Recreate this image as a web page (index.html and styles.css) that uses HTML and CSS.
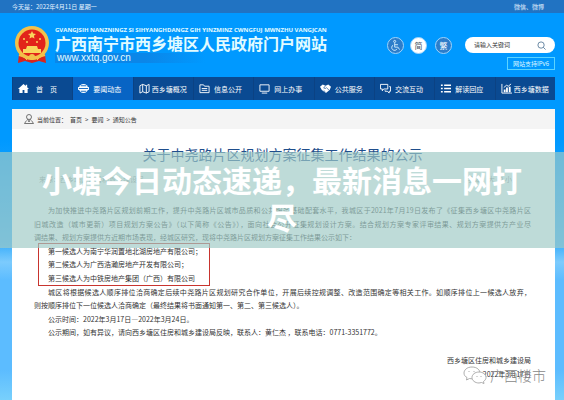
FILE: index.html
```html
<!DOCTYPE html>
<html lang="zh-CN">
<head>
    <meta charset="UTF-8">
    <meta name="viewport" content="width=device-width, initial-scale=1.0">
    <title>小塘今日动态速递，最新消息一网打尽</title>
    <link rel="stylesheet" href="styles.css">
</head>
<body>
    <div class="topbar">
        <span>今天是：2022年4月11日 星期一</span>
        <span>微信、微博</span>
    </div>

    <header class="header">
        <svg class="emblem" viewBox="0 0 36 38">
            <path d="M5 28 L31 28 L32 37 L25 35 L18 37 L11 35 L4 37 Z" fill="#d9251c"/>
            <circle cx="18" cy="17" r="17" fill="#f2c14a"/>
            <circle cx="18" cy="17" r="13.500" fill="#e2231a"/>
            <path d="M18 5 l1.200 2.600 2.800.3 -2.100 1.900 .6 2.800 -2.500 -1.400 -2.500 1.400 .6 -2.800 -2.100 -1.900 2.800 -.3z" fill="#f9d65c"/>
            <g fill="#f9d65c">
                <circle cx="10" cy="13" r="1"/><circle cx="13" cy="16" r="1"/><circle cx="23" cy="16" r="1"/><circle cx="26" cy="13" r="1"/>
                <path d="M13 20 h10 l1 3 h3 v4 H9 v-4 h3z"/>
            </g>
            <path d="M5 29 q13 5 26 0" fill="none" stroke="#f2c14a" stroke-width="2"/>
            <circle cx="18" cy="31" r="3" fill="#f2c14a"/>
            <path d="M9 30 l4 4 M27 30 l-4 4" stroke="#f2c14a"/>
        </svg>
        <div class="brand">
            <div class="brand-latin">GVANGJSIH NANZNINGZ SI SIHYANGHDANGZ GIH YINZMINZ CWNGFUJ MWNZHU VANGJCAN</div>
            <h1>广西南宁市西乡塘区人民政府门户网站</h1>
            <div class="brand-url">www.xxtq.gov.cn</div>
        </div>
        <div class="tools">
            <button class="round blue" aria-label="无障碍">
                <svg viewBox="0 0 16 16" fill="none" stroke="#d9f1ff" stroke-width="1.100">
                    <circle cx="7" cy="3" r="1.300"/><path d="M7 5 v5 h4 l2 3 M7 7 h4 M5 7.500 a3.500 3.500 0 1 0 5 4.500"/>
                </svg>
            </button>
            <button class="round white">简</button>
            <button class="round blue last">繁</button>
        </div>
        <div class="side">
            <form class="search">
                <input type="text" aria-label="搜索" placeholder="请输入关键词">
                <svg viewBox="0 0 10 10" fill="none" stroke="#5c7e9c"><circle cx="4.500" cy="4.500" r="3.500"/><path d="M7 7 l2.500 2.500"/></svg>
            </form>
            <a class="ipv6" href="#">网站支持IPv6</a>
        </div>
    </header>

    <nav class="nav">
        <a href="#" class="home">
            <svg viewBox="0 0 12 12" fill="#fff"><path d="M6 1 L0 6.500 h1.500 V11 H5 V7.500 h2 V11 h3.500 V6.500 H12 L10 4.600 V2 H8.500 v1.200z"/></svg>
            <span>首&emsp;页</span>
        </a>
        <a href="#" class="active">
            <svg viewBox="0 0 12 12"><circle cx="6" cy="6" r="5" fill="#fff"/><path d="M0 4.500 h12 v3 H0z" fill="#fff"/><path d="M1 6 h10 M3 3 h6 M3 9 h6" stroke="#0864c4"/></svg>
            <span>要闻动态</span>
        </a>
        <a href="#" class="tight">
            <svg viewBox="0 0 12 12" fill="none" stroke="#fff"><path d="M1 3 L4 1.500 L8 3 L11 1.500 V9.500 L8 11 L4 9.500 L1 11z M4 1.500 v8 M8 3 v8"/></svg>
            <span>西乡塘概况</span>
        </a>
        <a href="#">
            <svg viewBox="0 0 12 12" fill="none" stroke="#fff"><path d="M1 10.500 V2 h4 l1 1.500 h5 v7z M3 6 h6 M3 8 h6"/></svg>
            <span>信息公开</span>
        </a>
        <a href="#">
            <svg viewBox="0 0 12 12" fill="none" stroke="#fff"><path d="M1 2 h10 v7 H1z M3 11 h6"/></svg>
            <span>网上办事</span>
        </a>
        <a href="#">
            <svg viewBox="0 0 12 12"><path d="M0 4 L3 1.500 L6 3 L9 1.500 L12 4 L10.500 7.500 L6.500 11 L2 7.500z" fill="#fff"/><path d="M6 3 L4 5.500 L6 6 L7 5 L10 8 M4 8 l2 2" fill="none" stroke="#0a4a92" stroke-width=".7"/></svg>
            <span>公共服务</span>
        </a>
        <a href="#">
            <svg viewBox="0 0 12 12" fill="none" stroke="#fff"><path d="M.5 1.500 h8 v5 H4 L2.500 8.500 V6.500 h-2z M10 4 h1.500 v5 H10 v2 L8 9 H5.500 V8"/></svg>
            <span>交流互动</span>
        </a>
        <a href="#">
            <svg viewBox="0 0 12 12" stroke="#fff" stroke-width="1.500"><path d="M1 2.500 h2 M4.500 2.500 H12 M1 6 h2 M4.500 6 H12 M1 9.500 h2 M4.500 9.500 H12"/></svg>
            <span>解读回应</span>
        </a>
        <a href="#" class="tight">
            <svg viewBox="0 0 12 12" fill="none" stroke="#fff"><path d="M1 1 v10 h11"/><path d="M4 10 V7 M6.500 10 V5 M9.500 10 V4" stroke-width="2"/><path d="M3 5 L6 2.500 L8 3.500 L11 1"/></svg>
            <span>西乡塘数据</span>
        </a>
    </nav>

    <main class="page">
        <div class="crumbs">
            <svg viewBox="0 0 10 10" fill="none" stroke="#555" stroke-width=".8"><circle cx="5" cy="3" r="2.500"/><path d="M3.500 5 L5 8 L6.500 5 M2.500 6.500 L.5 9.500 h9 L7.500 6.500"/></svg>
            <span>当前位置：</span>
            <a href="#">首页</a> &gt; <a href="#">要闻</a> &gt; <a href="#">通知公告</a>
        </div>
        <article class="article">
            <h2>关于中尧路片区规划方案征集工作结果的公示</h2>
            <div class="meta">
                <span>来源：西乡塘区住房和城乡建设局</span>
                <span>【字体：大 中 小】</span>
            </div>
            <div class="lines">
                <p class="indent full">为加快推进中尧路片区规划前期工作，提升中尧路片区城市品质和公共服务基础配套水平，我城区于2021年7月19日发布了《征集西乡塘区中尧路片区</p>
                <p class="full">旧城改造（城市更新）项目规划方案公告》（以下简称《公告》），面向社会公开征集规划设计方案。结合规划方案专家评审结果、规划方案提供方产业尽</p>
                <p>调结果、规划方案提供方近期市场表现，经城区研究，现将中尧路片区规划方案征集工作结果公示如下：</p>
                <div class="picked">
                    <p>第一候选人为南宁华润置地北湖房地产有限公司；</p>
                    <p>第二候选人为广西浩瀚房地产开发有限公司；</p>
                    <p>第三候选人为中铁房地产集团（广西）有限公司</p>
                </div>
                <p class="indent full">城区将根据候选人顺序排位洽商确定后续中尧路片区规划研究合作单位，开展后续控规调整、改造范围确定等相关工作。如顺序排位上一候选人放弃，</p>
                <p>则按顺序排位下一位候选人洽商确定（最终结果将书面通知第一、第二、第三候选人）。</p>
                <p class="indent">公示时间：2022年3月17日—2022年3月24日。</p>
                <p class="indent">公示期间，如有异议，请向西乡塘区住房和城乡建设局反映，联系人：黄仁杰 ，联系电话：0771-3351772。</p>
            </div>
            <div class="sign">
                <p>西乡塘区住房和城乡建设局</p>
                <p>2022年3月17日</p>
            </div>
        </article>
    </main>

    <div class="watermark">
        <svg viewBox="0 0 24 18" fill="#fff" stroke="#999" stroke-width=".8">
            <path d="M9 1 C4 1 1 4 1 7 c0 2 1 3.500 3 4.500 L3.500 14 L6.500 12.500 C13 14 17 10 17 7 C17 4 14 1 9 1z"/>
            <path d="M16 6 c-4 0-7 2.500-7 5.500 S12 17 16 17 l2.500-.5 L21 17.500 L20.500 15.500 C22 14.500 23 13 23 11.500 C23 8.500 20 6 16 6z"/>
            <path d="M6 5 v1 M11 5 v1 M14 10 v1 M18 10 v1"/>
        </svg>
        <span>广西楼市</span>
    </div>

    <div class="banner">小塘今日动态速递，最新消息一网打尽</div>
</body>
</html>
```

FILE: styles.css
```css
* {
    box-sizing: border-box;
}
body {
    margin: 0;
    min-height: 100vh;
    display: flex;
    flex-direction: column;
    position: relative;
    font-family: "Noto Sans CJK SC", sans-serif;
    font-size: 7px;
    color: #333;
    background: linear-gradient(#0099ff 0, #0099ff 140px, #3fb0fb 245px, #7ccbfd 262px, #5cbcff 280px, #5cbcff 370px, #78d0fc 100%);
}
h1, h2, p {
    margin: 0;
}
a {
    color: inherit;
    text-decoration: none;
}
.topbar {
    height: 13px;
    padding: 0 20px 0 12px;
    display: flex;
    justify-content: space-between;
    font-size: 6px;
    line-height: 13px;
    color: #e4f2ff;
    background: #2173c2;
}
.header {
    height: 64px;
    padding: 13px 9px 0 14px;
    display: flex;
    align-items: flex-start;
}
.emblem {
    width: 36px;
    height: 38px;
}
.brand {
    margin-left: 5px;
    flex: 1;
    min-width: 0;
    color: #e2fbff;
    white-space: nowrap;
}
.brand-latin {
    font: bold 6px/8px "Open Sans", sans-serif;
}
.brand h1 {
    font-size: 16px;
    line-height: 19px;
    font-weight: 700;
}
.brand-url {
    width: 150px;
    padding-left: 2px;
    font: 10px/10px "Liberation Sans", sans-serif;
    background: linear-gradient(90deg, #0b86e8, #0b86e8 60%, #0099ff);
}
.tools {
    margin: 11px 13px 0 0;
    display: flex;
    gap: 6px;
}
.last {
    margin-left: 2px;
}
.round {
    width: 17px;
    height: 17px;
    padding: 0;
    border: 1px solid #9fd4fb;
    border-radius: 50%;
    font: 8px/15px "Noto Sans CJK SC", sans-serif;
}
.round svg {
    width: 13px;
    height: 13px;
    display: block;
    margin: 1px;
}
.blue {
    color: #fff;
    background: #2c7dca;
}
.white {
    color: #456;
    background: #fff;
}
.side {
    width: 90px;
    margin-top: 11px;
    display: flex;
    flex-direction: column;
    align-items: flex-end;
    gap: 4px;
}
.search {
    width: 100%;
    height: 16px;
    padding: 0 9px;
    display: flex;
    align-items: center;
    border-radius: 8px;
    background: #fff;
}
.search input {
    flex: 1;
    min-width: 0;
    padding: 0;
    border: 0;
    outline: 0;
    font: 6px/12px "Noto Sans CJK SC", sans-serif;
    background: none;
}
.search input::placeholder {
    color: #333;
}
.search svg {
    width: 9px;
    height: 9px;
}
.ipv6 {
    height: 13px;
    padding: 0 5px;
    border: 1px solid #5cd4ff;
    font-size: 6px;
    line-height: 11px;
    color: #dff8ff;
}
.nav {
    height: 23px;
    margin: 0 9px 0 12px;
    display: grid;
    grid-template-columns: repeat(9, minmax(0, 1fr));
    background: #0a4a92;
}
.nav a {
    padding-left: 5px;
    display: flex;
    align-items: center;
    gap: 4px;
    color: #fff;
    white-space: nowrap;
    border-left: 1px solid #0b4283;
}
.nav .home {
    gap: 7px;
}
.nav .active {
    background: #0864c4;
}
.nav .tight {
    gap: 2px;
}
.nav svg {
    width: 11px;
    height: 11px;
    flex: none;
}
.page {
    flex: 1;
    margin: 9px 9px 0 12px;
    background: #fff;
}
.crumbs {
    height: 20px;
    padding-left: 12px;
    display: flex;
    align-items: center;
    gap: 3px;
    font-size: 6px;
    background: #f4f4f4;
}
.crumbs svg {
    width: 10px;
    height: 10px;
}
.article {
    padding: 15px 24px 0 22px;
}
.article h2 {
    text-align: center;
    font-size: 14px;
    line-height: 20px;
    font-weight: 400;
    color: #1f4e8c;
}
.meta {
    margin: 8px 12px 17px 5px;
    display: flex;
    justify-content: space-between;
    line-height: 14px;
    color: #999;
}
/* ten text rows share the height equally */
.lines {
    height: 136px;
    display: grid;
    grid-template-rows: repeat(10, minmax(0, 1fr));
    line-height: 14px;
    white-space: nowrap;
}
.indent {
    padding-left: 14px;
}
.full {
    text-align: justify;
    text-align-last: justify;
}
.picked {
    grid-row: span 3;
    width: 170px;
    margin-left: 5px;
    padding-left: 9px;
    display: grid;
    grid-template-rows: subgrid;
    outline: 1px solid #c8342e;
}
.sign {
    margin-top: 14px;
    text-align: right;
    line-height: 14px;
}
.watermark {
    position: absolute;
    right: 18px;
    bottom: 16px;
    display: flex;
    align-items: center;
    gap: 3px;
    font-size: 14px;
    font-weight: 300;
    line-height: 18px;
    color: #888;
}
.watermark svg {
    width: 24px;
    height: 18px;
}
.banner {
    position: absolute;
    top: 152px;
    left: 0;
    right: 0;
    padding: 9px 40px 13px;
    text-align: center;
    font-size: 30px;
    line-height: 37px;
    font-weight: 700;
    color: #fff;
    background: rgba(159, 202, 198, .68);
}
```
